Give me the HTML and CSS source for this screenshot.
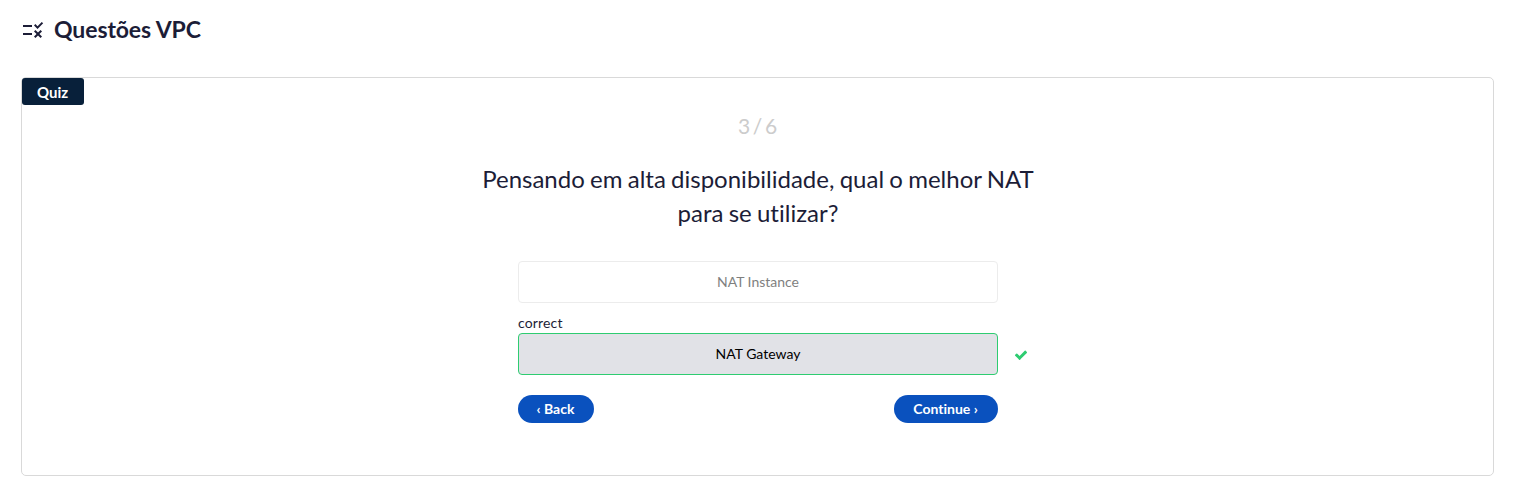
FILE: index.html
```html
<!DOCTYPE html>
<html lang="pt">
<head>
<meta charset="utf-8">
<title>Questões VPC</title>
<link rel="stylesheet" href="styles.css">
</head>
<body>
<header class="header">
  <svg class="header-icon" viewBox="0 0 24 24"><path d="M16.54 11 13 7.46l1.41-1.41 2.12 2.12 4.24-4.24 1.41 1.41L16.54 11zM11 7H2v2h9V7zm10 6.41L19.59 12 17 14.59 14.41 12 13 13.41 15.59 16 13 18.59 14.41 20 17 17.41 19.59 20 21 18.59 18.41 16 21 13.41zM11 15H2v2h9v-2z"/></svg>
  <h1 class="title">Questões VPC</h1>
</header>
<main class="quiz">
  <span class="tag">Quiz</span>
  <div class="counter">3 / 6</div>
  <h2 class="question">Pensando em alta disponibilidade, qual o melhor NAT<br>para se utilizar?</h2>
  <div class="answers">
    <div class="answer muted">NAT Instance</div>
    <div class="label">correct</div>
    <div class="answer correct">NAT Gateway
      <svg class="check" viewBox="0 0 1792 1792"><path d="M1671 566q0 40-28 68l-724 724-136 136q-28 28-68 28t-68-28l-136-136-362-362q-28-28-28-68t28-68l136-136q28-28 68-28t68 28l294 295 656-657q28-28 68-28t68 28l136 136q28 28 28 68z"/></svg>
    </div>
    <div class="actions"><button class="btn back">‹ Back</button><button class="btn continue">Continue ›</button></div>
  </div>
</main>
</body>
</html>
```
FILE: styles.css
```css
* { box-sizing: border-box; }
body { margin: 0; background: #fff; color: #1c1d37; font-family: Lato, sans-serif; font-variant-ligatures: none; }
.header { display: flex; align-items: center; gap: 9px; height: 59px; padding-left: 21px; }
.header-icon { width: 24px; height: 24px; fill: #1c1d37; }
.title { margin: 0 0 2px; font-size: 23px; line-height: 30px; font-weight: 700; letter-spacing: -0.1px; }
.quiz { position: relative; margin: 18px 20px 0 21px; height: 399px; border: 1px solid #d9d9d9; border-radius: 5px; padding: 35px 0 0 1px; text-align: center; }
.tag { position: absolute; left: 0; top: 0; width: 62px; height: 27px; padding-right: 1px; border-radius: 3px; background: #08203a; color: #fff; font-size: 15px; font-weight: 700; line-height: 28px; }
.counter { font-size: 21px; line-height: 26px; color: #ccc; word-spacing: -2.700px; padding-right: 1px; }
.question { margin: 23px 0 0; font-size: 24px; line-height: 34px; font-weight: 400; word-spacing: -0.9px; }
.answers { width: 480px; margin: 31px auto 0; font-size: 14px; text-align: left; }
.answer { position: relative; height: 42px; line-height: 40px; border: 1px solid #ececec; border-radius: 4px; text-align: center; }
.muted { color: #7f7f7f; }
.label { margin-top: 10px; height: 20px; line-height: 20px; letter-spacing: 0.15px; }
.correct { background: #e1e2e7; border-color: #2ecc71; color: #000; }
.check { position: absolute; left: 495px; top: 14px; width: 14px; height: 14px; fill: #2ecc71; }
.actions { display: flex; justify-content: space-between; margin-top: 20px; }
.btn { height: 28px; padding: 0 1px 0 0; border: 0; border-radius: 14px; background: #0a51be; color: #fff; font: 700 14px/28px Lato, sans-serif; font-variant-ligatures: none; }
.back { width: 76px; }
.continue { width: 104px; }
```
